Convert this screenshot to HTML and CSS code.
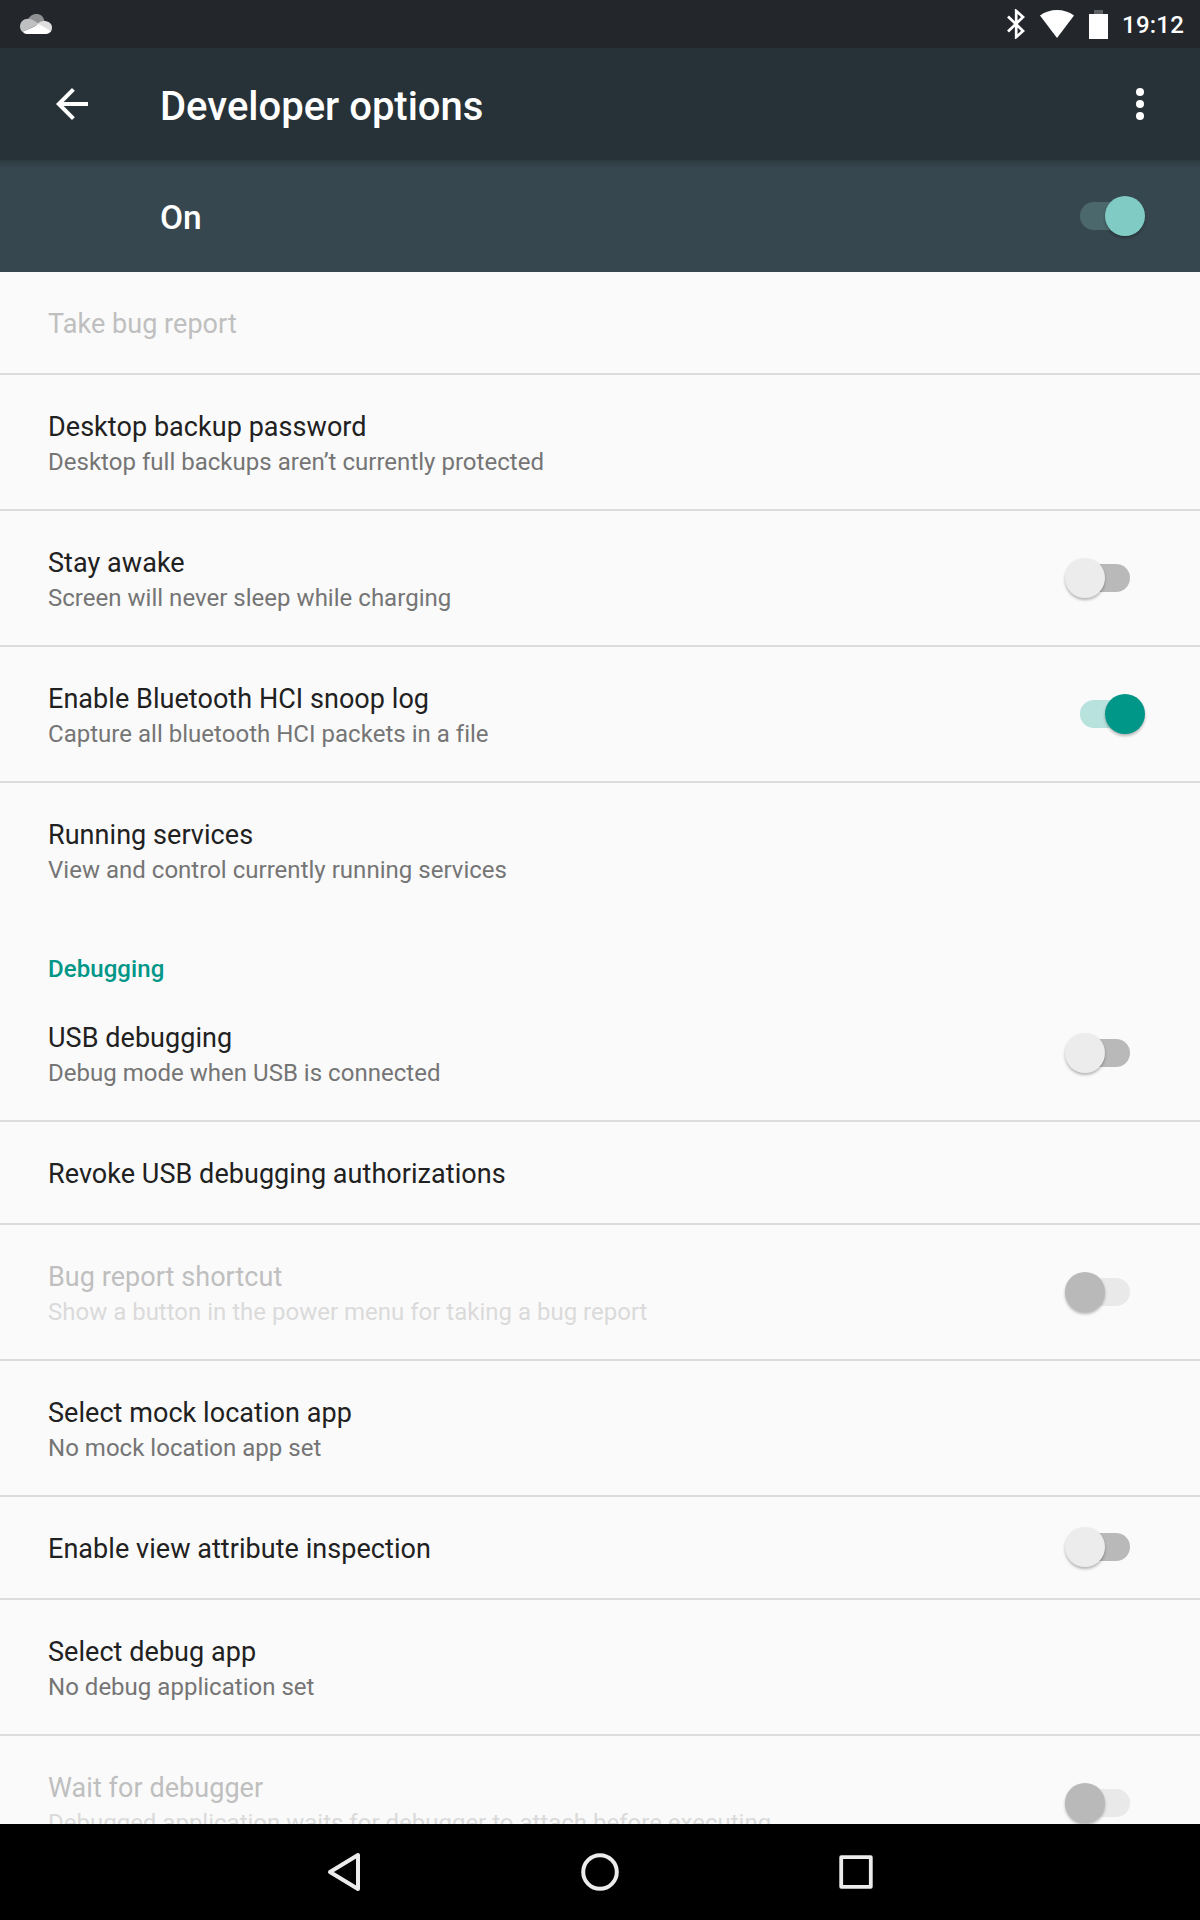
FILE: index.html
```html
<!DOCTYPE html>
<html lang="en">
<head>
<meta charset="utf-8">
<title>Developer options</title>
<link rel="stylesheet" href="styles.css">
</head>
<body>
<div class="screen">
  <div class="status-bar">
    <svg class="status-cloud" width="32" height="20" viewBox="0 0 32 20">
      <path fill="#8e9092" d="M8 5.500C10 1.500 13 0 16.500 0C20.500 0 23.500 2.500 24.500 7L17 12L8 8Z"/>
      <path fill="#bfc0c1" d="M6.500 20C2.500 19 0 16 0 12.500C0 8 3.500 4.700 8 4.700C12.500 4.700 15 7.500 19.500 10L4.500 17Z"/>
      <path fill="#dededf" d="M17 10.500C19 8 21.500 7 24 7C28.500 7 32 9.500 32 13.500C32 15 31.500 16.500 31 17.500Z"/>
      <path fill="#fff" d="M3.500 17.500C9 15 15 12.500 18.500 10.300C22 11.500 28 15.500 31 17.300C29.700 19.200 28 20 26 20H7C5.500 20 4.200 19.300 3.500 17.500Z"/>
    </svg>
    <div class="status-icons">
      <svg class="bluetooth" width="20" height="30" viewBox="0 0 20 30" fill="none" stroke="#fff" stroke-width="2.700">
        <path d="M2 7.500L17 22L10.200 28V2L17 8L2 22.500"/>
      </svg>
      <svg class="wifi" width="34" height="28" viewBox="0 0 34 28">
        <path fill="#fff" d="M0 5.500Q7.500 0 17 0T34 5.500L17 28Z"/>
      </svg>
      <svg class="battery" width="19" height="29" viewBox="0 0 19 29">
        <path fill="#606366" d="M5 0H14V4H5Z"/>
        <path fill="#fff" d="M0 4H19V29H0Z"/>
      </svg>
      <span class="clock">19:12</span>
    </div>
  </div>

  <header class="toolbar">
    <svg class="back" width="48" height="48" viewBox="0 0 24 24">
      <path fill="#fff" d="M20 11H7.830l5.590-5.590L12 4l-8 8 8 8 1.410-1.410L7.830 13H20v-2z"/>
    </svg>
    <h1 class="toolbar-title">Developer options</h1>
    <svg class="overflow" width="8" height="32" viewBox="0 0 8 32" fill="#fff">
      <circle cx="4" cy="4" r="4"/><circle cx="4" cy="16" r="4"/><circle cx="4" cy="28" r="4"/>
    </svg>
  </header>

  <div class="master">
    <span class="master-label">On</span>
    <span class="switch on light"><i class="thumb"></i></span>
  </div>

  <main class="list">
    <div class="item single disabled"><div class="text"><div class="title">Take bug report</div></div></div>
    <div class="item"><div class="text"><div class="title">Desktop backup password</div><div class="summary">Desktop full backups aren’t currently protected</div></div></div>
    <div class="item"><div class="text"><div class="title">Stay awake</div><div class="summary">Screen will never sleep while charging</div></div><span class="switch"><i class="thumb"></i></span></div>
    <div class="item"><div class="text"><div class="title">Enable Bluetooth HCI snoop log</div><div class="summary">Capture all bluetooth HCI packets in a file</div></div><span class="switch on"><i class="thumb"></i></span></div>
    <div class="item last"><div class="text"><div class="title">Running services</div><div class="summary">View and control currently running services</div></div></div>
    <h2 class="category">Debugging</h2>
    <div class="item"><div class="text"><div class="title">USB debugging</div><div class="summary">Debug mode when USB is connected</div></div><span class="switch"><i class="thumb"></i></span></div>
    <div class="item single"><div class="text"><div class="title">Revoke USB debugging authorizations</div></div></div>
    <div class="item disabled"><div class="text"><div class="title">Bug report shortcut</div><div class="summary">Show a button in the power menu for taking a bug report</div></div><span class="switch"><i class="thumb"></i></span></div>
    <div class="item"><div class="text"><div class="title">Select mock location app</div><div class="summary">No mock location app set</div></div></div>
    <div class="item single"><div class="text"><div class="title">Enable view attribute inspection</div></div><span class="switch"><i class="thumb"></i></span></div>
    <div class="item"><div class="text"><div class="title">Select debug app</div><div class="summary">No debug application set</div></div></div>
    <div class="item disabled"><div class="text"><div class="title">Wait for debugger</div><div class="summary">Debugged application waits for debugger to attach before executing</div></div><span class="switch"><i class="thumb"></i></span></div>
  </main>

  <nav class="nav-bar">
    <svg width="40" height="40" viewBox="0 0 40 40" fill="none" stroke="#ececec" stroke-width="4" stroke-linejoin="round">
      <path d="M34 3V37L6 20Z"/>
    </svg>
    <svg width="40" height="40" viewBox="0 0 40 40" fill="none" stroke="#ececec" stroke-width="4">
      <circle cx="20" cy="20" r="16.800"/>
    </svg>
    <svg width="40" height="40" viewBox="0 0 40 40" fill="none" stroke="#ececec" stroke-width="3.800" stroke-linejoin="round">
      <path d="M5.200 5.200H34.800V34.800H5.200Z"/>
    </svg>
  </nav>
</div>
</body>
</html>
```
FILE: styles.css
```css
* { box-sizing: border-box; }
body {
  margin: 0;
  font-family: Roboto, "Liberation Sans", sans-serif;
  background: #fafafa;
}
h1, h2 { margin: 0; }
svg { display: block; flex: none; }

.screen {
  display: flex;
  flex-direction: column;
  width: 1200px;
  height: 1920px;
  overflow: hidden;
}

.status-bar {
  flex: none;
  display: flex;
  align-items: center;
  justify-content: space-between;
  height: 48px;
  padding: 0 16px 0 20px;
  background: #23272c;
}
.status-icons { display: flex; align-items: center; }
.wifi { margin-left: 14px; }
.battery { margin: 0 14px 0 15px; }
.clock {
  padding-top: 2px;
  font-size: 24px;
  font-weight: 500;
  line-height: 46px;
  letter-spacing: .2px;
  color: #fff;
}

.toolbar {
  flex: none;
  display: flex;
  align-items: center;
  height: 112px;
  padding: 0 56px 0 48px;
  background: #273238;
}
.toolbar-title {
  flex: 1;
  padding: 6px 0 0 64px;
  font-size: 40px;
  font-weight: 500;
  line-height: 48px;
  color: #fff;
}

.master {
  flex: none;
  display: flex;
  align-items: center;
  justify-content: space-between;
  height: 112px;
  padding: 0 55px 0 160px;
  background: linear-gradient(#2d3b41 0, #37474f 8px);
}
.master-label {
  padding-top: 4px;
  font-size: 33.500px;
  font-weight: 500;
  line-height: 40px;
  color: #fff;
}

.list {
  flex: 1;
  min-height: 0;
  overflow: hidden;
}
.item {
  display: flex;
  align-items: center;
  justify-content: space-between;
  height: 136px;
  padding: 0 55px 0 48px;
  border-bottom: 2px solid #dcdcdc;
}
.item.single { height: 103px; }
.item.single .switch { margin-bottom: 1px; }
.item.last { border-bottom-color: transparent; }
.text { align-self: flex-start; padding-top: 33px; }
.title {
  font-size: 27px;
  line-height: 38px;
  letter-spacing: .050px;
  color: #212121;
}
.summary {
  font-size: 24px;
  line-height: 32px;
  letter-spacing: .020px;
  color: #757575;
}
.disabled .title { color: #bfbfbf; }
.disabled .summary { color: #dadada; letter-spacing: 0; }
.category {
  height: 67px;
  padding: 34px 48px 0;
  font-size: 24px;
  font-weight: 500;
  line-height: 32px;
  letter-spacing: .080px;
  color: #009688;
}

.switch {
  --track: #b9b9b9;
  --thumb: #ececec;
  display: flex;
  align-items: center;
  width: 80px;
  height: 40px;
}
.switch::before {
  content: "";
  flex: none;
  width: 50px;
  height: 28px;
  margin: 0 -65px 0 15px;
  border-radius: 14px;
  background: var(--track);
}
.thumb {
  position: relative;
  flex: none;
  width: 40px;
  height: 40px;
  border-radius: 50%;
  background: var(--thumb);
  box-shadow: 0 2px 3px rgba(0, 0, 0, .28);
}
.on { --track: #b8e2dd; --thumb: #009688; }
.on .thumb { margin-left: 40px; }
.light { --track: #4b686c; --thumb: #80cbc4; }
.disabled .switch { --track: #e9e9e9; --thumb: #b9b9b9; }

.nav-bar {
  flex: none;
  display: flex;
  align-items: center;
  justify-content: center;
  gap: 216px;
  height: 96px;
  background: #000;
}
```
